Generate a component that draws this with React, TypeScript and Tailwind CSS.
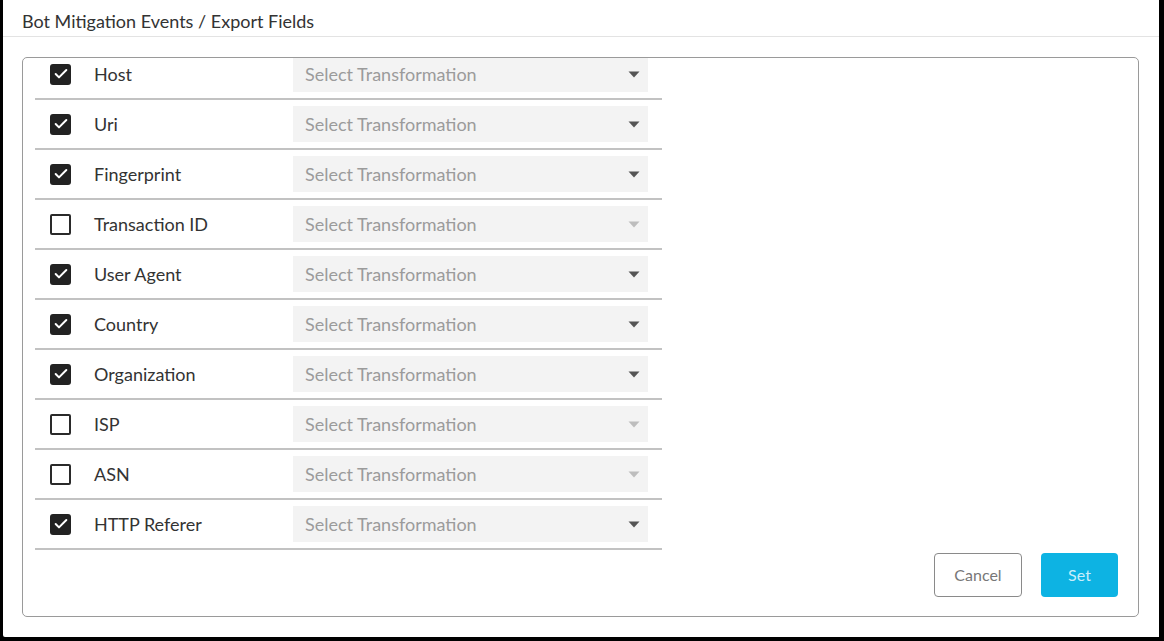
import { Check } from "lucide-react";

const fields = [
  { name: "Host", checked: true },
  { name: "Uri", checked: true },
  { name: "Fingerprint", checked: true },
  { name: "Transaction ID", checked: false },
  { name: "User Agent", checked: true },
  { name: "Country", checked: true },
  { name: "Organization", checked: true },
  { name: "ISP", checked: false },
  { name: "ASN", checked: false },
  { name: "HTTP Referer", checked: true },
];

function Checkbox({ checked }: { checked: boolean }) {
  return checked ? (
    <div className="w-[21px] h-[21px] rounded-[3px] bg-[#222] flex items-center justify-center">
      <Check className="w-[16px] h-[16px] text-white" strokeWidth={3} />
    </div>
  ) : (
    <div className="w-[21px] h-[21px] rounded-[2px] border-2 border-[#2a2a2a] bg-white" />
  );
}

function FieldRow({ name, checked }: { name: string; checked: boolean }) {
  return (
    <div className="flex items-center h-[50px] border-b-2 border-[#c2c2c2] w-[627px]">
      <div className="w-[59px] pl-[15px] flex items-center">
        <Checkbox checked={checked} />
      </div>
      <div className="w-[199px] text-[18px] text-[#333]">{name}</div>
      {/* select */}
      <div className="w-[355px] h-[36px] bg-[#f3f3f3] flex items-center justify-between pl-[12px] pr-[8px]">
        <span className="text-[18px] text-[#9b9b9b]">Select Transformation</span>
        <svg width="12" height="7" viewBox="0 0 12 7">
          <path d="M0.5 0.5 L11.5 0.5 L6 6.5 Z" fill={checked ? "#555" : "#bdbdbd"} />
        </svg>
      </div>
    </div>
  );
}

export default function App() {
  return (
    <div className="h-[641px] w-[1164px] bg-black pl-[3px] pr-[5px] pb-[4px] font-['Lato','Noto_Sans',sans-serif]">
      <div className="h-full bg-white flex flex-col rounded-bl-[2px]">
        {/* 제목 */}
        <div className="h-[37px] border-b border-[#e3e3e3] pl-[19px] pt-[11px] text-[18px] text-[#333] leading-[20px]">
          Bot Mitigation Events / Export Fields
        </div>
        <div className="flex-1 pt-[20px] pb-[20px] pl-[19px] pr-[20px] flex">
          <div className="flex-1 border border-[#9a9a9a] rounded-[5px] overflow-hidden flex flex-col">
            <div className="pl-[12px] -mt-[8px]">
              {fields.map((f) => (
                <FieldRow key={f.name} name={f.name} checked={f.checked} />
              ))}
            </div>
            <div className="flex-1" />
            {/* 버튼 */}
            <div className="flex justify-end gap-[19px] pr-[20px] pb-[19px]">
              <button className="w-[88px] h-[44px] border-[1.5px] border-[#8a8a8a] rounded-[4px] text-[16px] text-[#777] bg-white">
                Cancel
              </button>
              <button className="w-[77px] h-[44px] rounded-[4px] text-[16px] text-[#c9eefb] bg-[#0db3e3]">
                Set
              </button>
            </div>
          </div>
        </div>
      </div>
    </div>
  );
}
